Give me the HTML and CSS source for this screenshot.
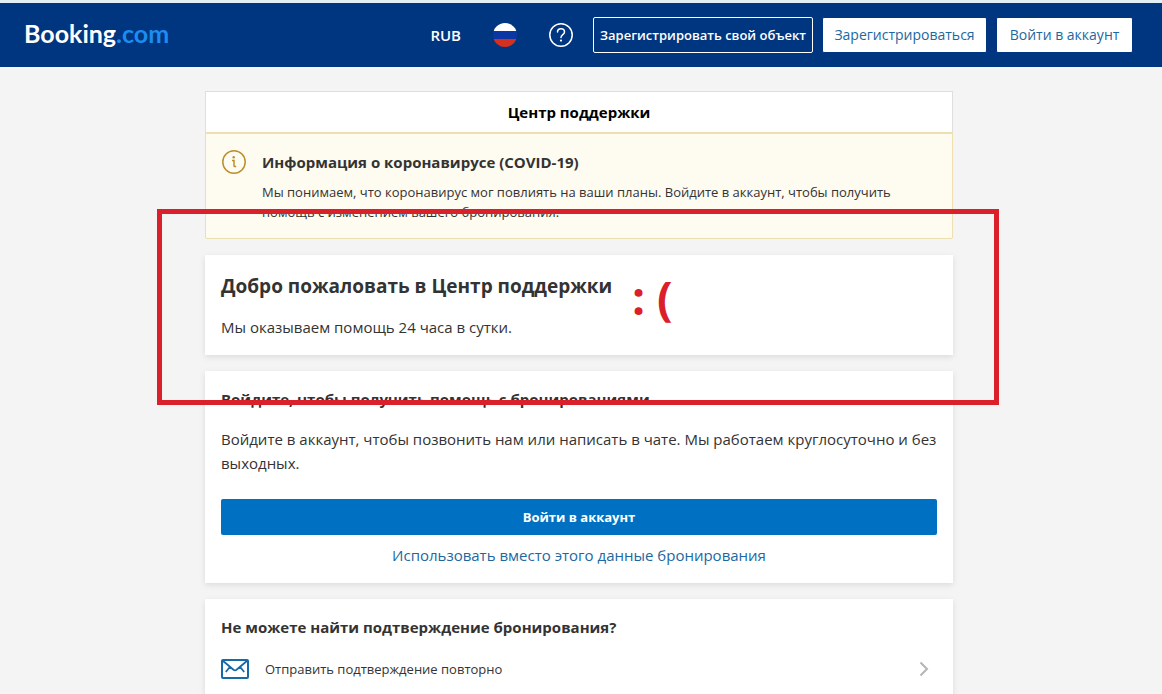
FILE: index.html
```
<!DOCTYPE html>
<html lang="ru">

<head>
    <meta charset="UTF-8">
    <meta name="viewport" content="width=device-width, initial-scale=1.0">
    <title>Центр поддержки</title>
    <link rel="stylesheet" href="styles.css">
</head>

<body>
    <header class="header">
        <a href="#" class="logo">Booking<span>.com</span></a>

        <nav class="menu">
            <button type="button" class="currency">RUB</button>
            <button type="button" class="icon-btn" aria-label="Выбрать язык">
                <svg width="24" height="24" viewBox="0 0 24 24">
                    <clipPath id="circle"><circle cx="12" cy="12" r="12" /></clipPath>
                    <g clip-path="url(#circle)">
                        <rect width="24" height="8" fill="#fff" />
                        <rect y="8" width="24" height="8" fill="#0b37a4" />
                        <rect y="16" width="24" height="8" fill="#d5301f" />
                    </g>
                </svg>
            </button>
            <button type="button" class="icon-btn" aria-label="Помощь">
                <svg width="24" height="24" viewBox="0 0 24 24" fill="none" stroke="#fff" stroke-width="1.5" stroke-linecap="round">
                    <circle cx="12" cy="12" r="11.2" />
                    <path d="M8.5 9c0-2 1.500-3.300 3.500-3.300s3.500 1.300 3.500 3.200c0 2.700-3.500 2.800-3.500 5.500" />
                    <circle cx="12" cy="17.600" r="1.100" fill="#fff" stroke="none" />
                </svg>
            </button>
            <div class="menu-buttons">
                <a href="#" class="btn btn-outline">Зарегистрировать свой объект</a>
                <a href="#" class="btn btn-wide">Зарегистрироваться</a>
                <a href="#" class="btn">Войти в аккаунт</a>
            </div>
        </nav>
    </header>

    <main class="page">
        <div class="content">
            <h1 class="page-title">Центр поддержки</h1>

            <section class="alert">
                <svg class="alert-icon" width="24" height="24" viewBox="0 0 24 24" fill="none" stroke="#bc8f2c" stroke-width="1.500">
                    <circle cx="12" cy="12" r="11.200" />
                    <path d="M10 10.500h2v5.200c0 .6.300.8.800.8h1.400" />
                    <circle cx="11.700" cy="7.300" r="1.200" fill="#bc8f2c" stroke="none" />
                </svg>
                <div>
                    <h2>Информация о коронавирусе (COVID-19)</h2>
                    <p>Мы понимаем, что коронавирус мог повлиять на ваши планы. Войдите в аккаунт, чтобы получить помощь с изменением вашего бронирования.</p>
                </div>
            </section>

            <section class="card welcome">
                <h2>Добро пожаловать в Центр поддержки</h2>
                <p>Мы оказываем помощь 24 часа в сутки.</p>
            </section>

            <section class="card login">
                <h3>Войдите, чтобы получить помощь с бронированиями</h3>
                <p>Войдите в аккаунт, чтобы позвонить нам или написать в чате. Мы работаем круглосуточно и без выходных.</p>
                <button type="button" class="login-btn">Войти в аккаунт</button>
                <a href="#" class="login-link">Использовать вместо этого данные бронирования</a>
            </section>

            <section class="card resend">
                <h3>Не можете найти подтверждение бронирования?</h3>
                <a href="#" class="resend-link">
                    <svg width="28" height="20" viewBox="0 0 28 20" fill="none" stroke="#176aa8" stroke-width="2" stroke-linejoin="round">
                        <rect x="1" y="1" width="26" height="18" rx="1" />
                        <path d="M1.500 1.500l11 9.300q1.500 1.200 3 0l11-9.300M4.800 13l4-5M23.200 13l-4-5" stroke-width="1.800" />
                    </svg>
                    <span>Отправить подтверждение повторно</span>
                    <svg class="arrow" width="10" height="16" viewBox="0 0 10 16" fill="none" stroke="#b5b5b5" stroke-width="2">
                        <path d="M1.500 1.500L8 8l-6.500 6.500" />
                    </svg>
                </a>
            </section>

            <!-- Пометка поверх страницы -->
            <div class="mark"><span>: (</span></div>
        </div>
    </main>
</body>

</html>
```
FILE: styles.css
```
* {
    margin: 0;
    padding: 0;
    box-sizing: border-box;
}

body {
    display: flex;
    flex-direction: column;
    height: 100vh;
    overflow-x: hidden;
    background-color: #f4f4f4;
    color: #333333;
    font-family: "Open Sans", "Noto Sans", sans-serif;
    font-size: 15px;
    line-height: 24px;
}

a {
    color: #1c689f;
    text-decoration: none;
}

button {
    border: none;
    background: none;
    font-family: inherit;
    cursor: pointer;
}

svg {
    display: block;
    flex-shrink: 0;
}

/* Шапка */
.header {
    display: flex;
    justify-content: space-between;
    align-items: center;
    height: 67px;
    flex-shrink: 0;
    padding: 0 29px 0 24px;
    border-top: 3px solid #e3eff7;
    background-color: #003580;
}

.logo {
    padding-bottom: 4px;
    color: #ffffff;
    font-family: Lato, sans-serif;
    font-size: 25px;
    font-weight: bold;
}

.logo span {
    color: #1d8cf0;
}

.menu {
    display: flex;
    align-items: center;
    gap: 32px;
}

.currency {
    color: #ffffff;
    font-size: 15px;
    font-weight: 600;
}

.icon-btn {
    width: 24px;
    height: 24px;
}

.menu-buttons {
    display: flex;
    gap: 9px;
    margin-left: -12px;
}

.btn {
    height: 36px;
    width: 137px;
    border: 1px solid #003580;
    border-radius: 2px;
    background-color: #ffffff;
    font-size: 14px;
    line-height: 34px;
    text-align: center;
    white-space: nowrap;
}

.btn-wide {
    width: 165px;
}

.btn-outline {
    width: 220px;
    border-color: #ffffff;
    background-color: #003580;
    color: #ffffff;
    font-size: 13px;
    font-weight: 600;
}

/* Содержимое */
.page {
    flex: 1;
    display: flex;
    padding: 24px 4px 0 0;
}

.content {
    position: relative;
    display: flex;
    flex-direction: column;
    width: 100%;
    max-width: 748px;
    margin: 0 auto;
}

.page-title {
    height: 42px;
    border: 1px solid #dedede;
    border-bottom-color: #eddfae;
    background-color: #ffffff;
    color: #000000;
    font-size: 15px;
    line-height: 40px;
    text-align: center;
}

.alert {
    display: flex;
    gap: 16px;
    padding: 16px;
    border: 1px solid #eddfae;
    border-radius: 0 0 2px 2px;
    background-color: #fefbf0;
}

.alert h2 {
    margin-bottom: 8px;
    font-size: 15px;
}

.alert p {
    font-size: 13px;
    line-height: 20px;
}

.card {
    display: flex;
    flex-direction: column;
    margin-top: 16px;
    padding: 16px;
    background-color: #ffffff;
    box-shadow: 0 2px 6px rgba(0, 0, 0, 0.1);
}

.card h3 {
    font-size: 15px;
}

.welcome h2 {
    margin-bottom: 14px;
    font-size: 19px;
    line-height: 30px;
}

.login p {
    margin: 16px 0 24px;
}

.login-btn {
    height: 36px;
    border-radius: 2px;
    background-color: #0071c2;
    color: #ffffff;
    font-size: 13px;
    font-weight: bold;
}

.login-link {
    align-self: center;
    margin-top: 8px;
}

.resend {
    flex: 1;
}

.resend-link {
    display: flex;
    align-items: center;
    gap: 16px;
    padding: 18px 8px 18px 0;
    color: #333333;
    font-size: 13px;
}

.arrow {
    margin-left: auto;
}

/* Красная рамка */
.mark {
    position: absolute;
    top: 118px;
    left: -48px;
    right: -46px;
    height: 196px;
    border: 5px solid #da202a;
    color: #da202a;
    pointer-events: none;
}

.mark span {
    position: absolute;
    top: 53px;
    left: 470px;
    font-size: 46px;
    font-weight: bold;
    line-height: 60px;
    white-space: nowrap;
}
```
